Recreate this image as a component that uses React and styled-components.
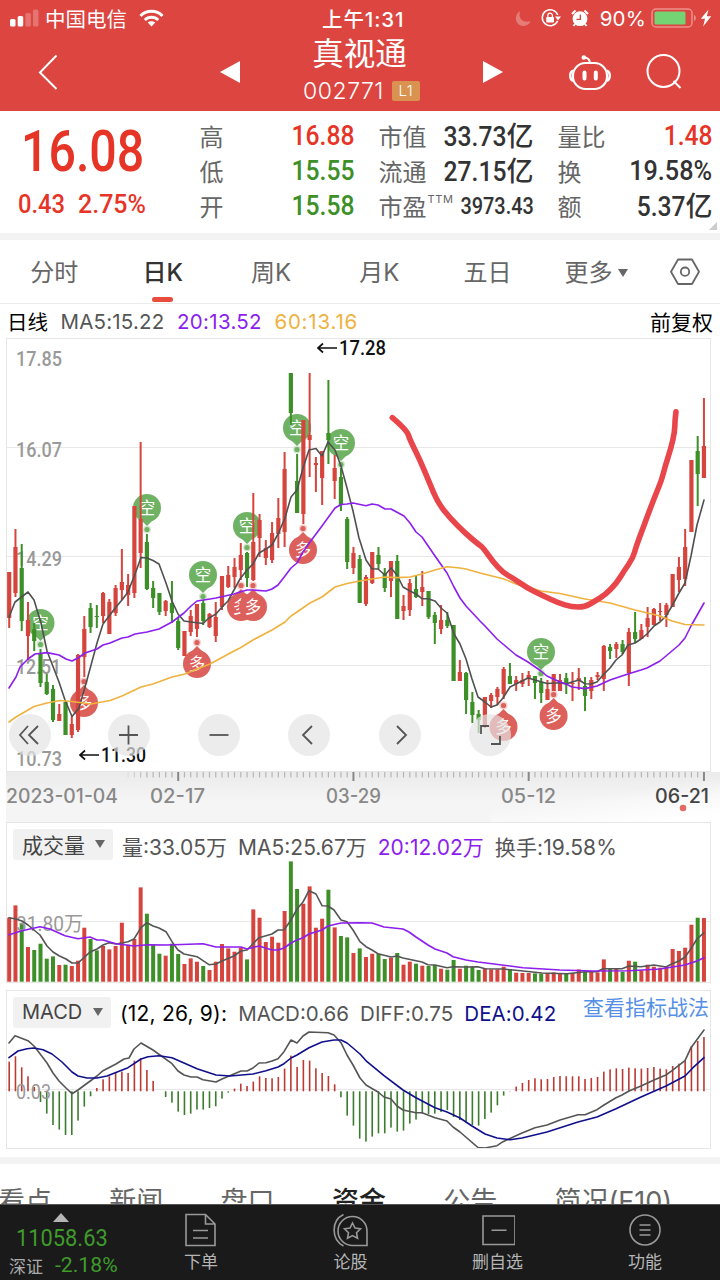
import React from "react";
import styled, { createGlobalStyle } from "styled-components";

const RED = "#d6453d";
const GREEN = "#3d8f27";
const PURPLE = "#8c1eee";

const GlobalStyle = createGlobalStyle`
    * {
        box-sizing: border-box;
    }

    body {
        margin: 0;
        background: #fff;
        font-family: Inter, "Noto Sans CJK SC", sans-serif;
        color: #333;
    }

    svg {
        display: block;
    }
`;

const Screen = styled.div`
    width: 720px;
    height: 1280px;
    overflow: hidden;
    display: flex;
    flex-direction: column;
    white-space: nowrap;
`;

/* ---------- header ---------- */

const Header = styled.header`
    flex: 0 0 111px;
    background: #dc4540;
    color: #fff;
`;

const StatusBar = styled.div`
    height: 36px;
    padding: 0 8px 0 10px;
    display: grid;
    grid-template-columns: 312px 1fr auto;
    align-items: center;
    font-size: 20px;
`;

const StatusGroup = styled.div`
    display: flex;
    align-items: center;
    gap: ${({ $gap }) => $gap || 0}px;
`;

const Carrier = styled.span`
    margin: 0 12px 0 6px;
    font-size: 20.5px;
    font-weight: 390;
`;

const Clock = styled.span`
    font-size: 20.5px;
    font-weight: 450;
    letter-spacing: 0.9px;
`;

const Percent = styled.span`
    font-size: 20.5px;
    letter-spacing: 0.2px;
    margin: 0 -5px 0 1px;
`;

const NavBar = styled.div`
    height: 75px;
    display: grid;
    grid-template-columns: 210px 40px 223px 40px 1fr;
    align-items: center;
`;

const NavIcon = styled.div`
    padding: 0 0 3px ${({ $left }) => $left || 0}px;
    display: flex;
    gap: ${({ $gap }) => $gap || 0}px;
`;

const TitleBlock = styled.div`
    display: flex;
    flex-direction: column;
    align-items: center;
    height: 75px;
`;

const StockName = styled.div`
    margin-right: 4px;
    font-size: 31.5px;
    line-height: 35px;
    font-weight: 390;
`;

const StockCode = styled.div`
    display: flex;
    align-items: center;
    gap: 8px;
    height: 44px;
    font-size: 23px;
    font-weight: 350;
    letter-spacing: 0.5px;
`;

const LevelBadge = styled.span`
    width: 28px;
    height: 20px;
    border-radius: 2px;
    background: #d9924f;
    font-size: 15px;
    line-height: 20px;
    text-align: center;
`;

/* ---------- quote ---------- */

const Quote = styled.section`
    position: relative;
    flex: 0 0 122px;
    display: grid;
    grid-template-columns: 164px 155px 155px 155px;
    column-gap: 24px;
    padding-top: 7px;
`;

const Corner = styled.i`
    position: absolute;
    right: 3px;
    bottom: 3px;
    border: 4px solid;
    border-color: transparent #ccc #ccc transparent;
`;

const PriceBlock = styled.div`
    width: 176px;
    color: #e63426;
    font-family: Roboto, sans-serif;
    font-weight: 500;
`;

const Num = styled.span`
    display: inline-block;
    font-family: Roboto, "Noto Sans CJK SC", sans-serif;
    font-weight: ${({ $weight }) => $weight || 500};
    font-size: ${({ $size }) => $size || 28}px;
    transform: scaleX(${({ $scale }) => $scale || 0.88});
    transform-origin: ${({ $origin }) => $origin || "right"} center;
`;

const Price = styled.div`
    height: 69px;
    line-height: 68px;
    padding-left: 21px;
`;

const Change = styled.div`
    display: flex;
    gap: 9px;
    padding-left: 18px;
    height: 35px;
    line-height: 35px;
`;

const QuoteColumn = styled.div`
    margin-left: 11.5px;
    width: 155px;
`;

const QuoteRow = styled.div`
    display: flex;
    justify-content: space-between;
    align-items: center;
    height: 35px;
    font-size: 24px;
    font-weight: 390;
    color: #666;

    ${Num} {
        margin-left: -20px;
        color: ${({ $color }) => $color || "#333"};
    }
`;

const Unit = styled.span`
    display: inline-block;
    font-family: "Noto Sans CJK SC", sans-serif;
    font-size: 27px;
    font-weight: 500;
    line-height: 33px;
    color: #333;
`;

const Sup = styled.sup`
    font-size: 11px;
    letter-spacing: 0.6px;
    vertical-align: 13px;
    line-height: 0;
    margin-left: 1px;
`;

const Divider = styled.div`
    flex: 0 0 7px;
    background: #f3f3f3;
`;

/* ---------- period tabs ---------- */

const PeriodTabs = styled.nav`
    flex: 0 0 64px;
    display: grid;
    grid-template-columns: 108.5px 108.5px 108px 108.5px 108px 109px 1fr;
    border-bottom: 1px solid #ececec;
`;

const PeriodTab = styled.div`
    display: flex;
    flex-direction: column;
    align-items: center;
    padding-top: 16px;
    font-size: 24px;
    line-height: 34px;
    font-weight: ${({ $active }) => ($active ? 500 : 370)};
    color: ${({ $active }) => ($active ? "#333" : "#666")};

    &::after {
        content: "";
        width: 21px;
        height: 5px;
        margin-top: 7px;
        border-radius: 3px;
        background: ${({ $active }) => ($active ? "#e84d3d" : "transparent")};
    }
`;

const Caret = styled.i`
    display: inline-block;
    margin-left: 5px;
    vertical-align: 4px;
    border-left: 5.5px solid transparent;
    border-right: 5.5px solid transparent;
    border-top: 8px solid #666;
`;

const TabIcon = styled.div`
    padding: 17px 0 0 18px;
`;

/* ---------- charts ---------- */

const InfoRow = styled.div`
    flex: 0 0 34px;
    display: flex;
    align-items: center;
    padding: 0 7px 0 7px;
    gap: 12.5px;
    font-size: 20.5px;
    color: #555;
`;

const Metric = styled.span`
    color: ${({ $color }) => $color || "#555"};
    font-size: ${({ $size }) => $size || 20.5}px;
    letter-spacing: ${({ $spacing }) => $spacing || 0}px;
    font-weight: 390;
`;

const Adjust = styled.span`
    margin-left: auto;
    font-size: 21px;
    font-weight: 390;
    color: #000;
`;

const ChartPanel = styled.section`
    position: relative;
    flex: 0 0 ${({ $height }) => $height}px;
    width: 705px;
    margin: 0 0 ${({ $after }) => $after || 0}px 6px;
    border: 1px solid #e6e6e6;

    > svg {
        margin: 0 -1px;
    }
`;

const Controls = styled.div`
    position: absolute;
    left: 1.5px;
    bottom: 15px;
    display: flex;
    gap: 48.3px;

    button:first-child {
        margin-right: 9px;
    }
`;

const RoundButton = styled.button`
    width: 42px;
    height: 42px;
    padding: 0;
    border: 0;
    border-radius: 50%;
    background: rgba(228, 228, 228, 0.7);
`;

const TimeAxis = styled.div`
    flex: 0 0 50px;
    margin-left: 6px;
    background: linear-gradient(172deg, rgba(255, 255, 255, 0) 45%, #fff 90%) right / 230px 100% no-repeat,
        linear-gradient(#ebebeb, #f5f5f5 60%);
`;

const IndicatorHead = styled.div`
    display: flex;
    align-items: center;
    height: 38px;
    padding-left: 6px;
    gap: 11px;
    color: #555;
`;

const Select = styled.div`
    display: flex;
    align-items: center;
    justify-content: space-between;
    width: ${({ $width }) => $width}px;
    height: 31px;
    margin: 5px -2px 0 0;
    padding: 0 8px 2px 9px;
    border-radius: 3px;
    background: #f1f1f1;
    color: #444;
    font-size: ${({ $size }) => $size || 20}px;
    font-weight: 390;
`;

const HeadText = styled(Metric)`
    margin-top: 7px;
`;

const HelpLink = styled.a`
    margin: 0 1px 8px auto;
    font-size: 21px;
    font-weight: 390;
    color: #5590e6;
`;

/* ---------- bottom ---------- */

const SectionTabs = styled.nav`
    flex: 0 0 40px;
    overflow: hidden;
    display: flex;
    padding: 20px 0 0 0;
    margin-left: -2px;
    gap: 57.3px;
    font-size: 27px;
    line-height: 36px;
`;

const SectionTab = styled.span`
    font-weight: ${({ $active }) => ($active ? 500 : 370)};
    color: ${({ $active }) => ($active ? "#222" : "#666")};
`;

const BottomBar = styled.footer`
    flex: 0 0 77px;
    display: grid;
    grid-template-columns: 126px 150px 149px 145px 150px;
    border-top: 1px solid #555;
    background: #1a1a1a;
    color: #b5b5b5;
`;

const IndexBox = styled.div`
    padding-left: 9px;
    color: #3f9b2b;

    i {
        display: block;
        width: 0;
        margin: 8px 0 0 44px;
        border-left: 8px solid transparent;
        border-right: 8px solid transparent;
        border-bottom: 9px solid #b5b5b5;
    }
`;

const IndexValue = styled.div`
    height: 33px;
    padding-left: 7px;
    line-height: 33px;
`;

const IndexChange = styled.div`
    display: flex;
    align-items: center;
    gap: 12px;
    height: 20px;
    font-size: 17px;

    span:first-child {
        color: #aaa;
        font-weight: 390;
    }
`;

const BarItem = styled.div`
    display: flex;
    flex-direction: column;
    align-items: center;
    padding-top: 8px;
    gap: 3px;
    font-size: 17px;
    font-weight: 390;
    line-height: 25px;
`;

/* One row per session: high, body top, body bottom, low (screen y), "r" rising or "g" falling */
const CANDLES = [
    [572, 572, 618, 628, "r"], [529, 547, 593, 597, "r"], [544, 568, 621, 631, "g"], [602, 620, 636, 660, "r"],
    [623, 629, 641, 651, "g"], [649, 653, 683, 687, "g"], [674, 682, 694, 695, "g"], [685, 689, 720, 722, "g"],
    [704, 714, 721, 721, "r"], [702, 702, 735, 735, "g"], [716, 724, 735, 738, "r"], [654, 655, 730, 732, "r"],
    [616, 629, 657, 677, "r"], [603, 608, 627, 633, "g"], [605, 616, 617, 628, "g"], [592, 593, 616, 623, "r"],
    [599, 602, 634, 634, "r"], [585, 588, 613, 616, "r"], [549, 582, 590, 600, "r"], [574, 585, 595, 606, "r"],
    [506, 506, 593, 598, "r"], [442, 519, 553, 568, "r"], [534, 542, 589, 590, "g"], [581, 588, 598, 608, "g"],
    [593, 593, 612, 615, "g"], [600, 601, 611, 616, "r"], [581, 603, 613, 623, "g"], [617, 621, 648, 650, "g"],
    [631, 631, 656, 656, "r"], [610, 616, 632, 636, "r"], [604, 604, 629, 637, "r"], [600, 603, 621, 625, "g"],
    [613, 614, 627, 628, "r"], [602, 617, 636, 642, "r"], [576, 576, 607, 610, "r"], [566, 575, 587, 588, "r"],
    [558, 567, 577, 588, "r"], [543, 555, 570, 580, "r"], [552, 553, 578, 587, "g"], [493, 542, 580, 581, "r"],
    [514, 520, 538, 557, "r"], [540, 548, 558, 565, "r"], [522, 533, 560, 563, "r"], [498, 518, 534, 548, "r"],
    [452, 469, 532, 547, "r"], [373, 373, 413, 425, "g"], [454, 481, 513, 513, "g"], [420, 420, 514, 524, "r"],
    [373, 435, 440, 477, "r"], [457, 463, 465, 492, "r"], [451, 451, 478, 505, "r"], [380, 433, 440, 464, "g"],
    [455, 468, 481, 499, "r"], [468, 477, 505, 511, "g"], [517, 519, 562, 569, "g"], [547, 553, 568, 574, "r"],
    [555, 559, 603, 603, "g"], [575, 577, 604, 606, "r"], [552, 552, 583, 584, "r"], [547, 555, 564, 569, "g"],
    [568, 573, 588, 592, "g"], [561, 561, 581, 597, "r"], [555, 561, 619, 619, "g"], [595, 606, 611, 620, "r"],
    [579, 583, 610, 616, "r"], [575, 589, 597, 598, "g"], [571, 587, 592, 606, "r"], [591, 591, 617, 619, "g"],
    [612, 615, 623, 644, "g"], [605, 620, 629, 634, "r"], [612, 620, 626, 628, "g"], [625, 625, 681, 681, "g"],
    [660, 672, 681, 681, "r"], [672, 673, 700, 714, "g"], [692, 702, 715, 723, "g"], [710, 714, 720, 733, "g"],
    [697, 697, 725, 728, "r"], [693, 695, 701, 708, "r"], [687, 689, 697, 705, "r"], [667, 669, 694, 699, "r"],
    [663, 676, 684, 684, "g"], [676, 680, 684, 691, "r"], [673, 680, 684, 687, "r"], [671, 675, 679, 686, "r"],
    [676, 676, 683, 699, "g"], [678, 682, 693, 703, "g"], [680, 689, 700, 700, "r"], [674, 674, 691, 691, "r"],
    [674, 680, 691, 691, "r"], [673, 678, 683, 694, "g"], [672, 683, 684, 701, "r"], [668, 678, 680, 690, "r"],
    [677, 686, 696, 711, "g"], [677, 680, 691, 699, "r"], [672, 675, 677, 680, "r"], [645, 646, 679, 691, "r"],
    [644, 647, 651, 659, "g"], [642, 644, 649, 658, "r"], [640, 644, 652, 654, "g"], [628, 632, 673, 686, "r"],
    [612, 632, 639, 643, "g"], [624, 630, 639, 639, "r"], [607, 618, 627, 637, "r"], [608, 609, 625, 625, "r"],
    [603, 611, 612, 621, "r"], [603, 605, 615, 627, "r"], [574, 574, 607, 607, "r"], [557, 567, 580, 592, "r"],
    [529, 547, 579, 586, "r"], [460, 460, 532, 532, "r"], [436, 451, 474, 506, "g"], [398, 446, 478, 478, "r"],
];

/* Bar heights in px */
const VOLUMES = [
    64, 76.3, 58, 34.7, 31.7, 38, 23, 25.3, 16.7, 17, 15.7, 21, 54, 42.7, 31.3, 35.7, 32.3, 35.7, 59, 37, 42.7, 94.3,
    68, 37, 28, 26, 38, 27.7, 17.7, 23.3, 20, 15.7, 11.7, 20, 37.7, 33.3, 30, 34, 22.3, 72.3, 64, 39.7, 45, 39, 70.7,
    120.3, 92.7, 78, 95.3, 54, 63, 92, 54.3, 45.7, 44.3, 28.7, 33.3, 24.7, 28, 27.7, 22.7, 24, 28.7, 17, 20, 18, 16,
    15.7, 16.7, 13, 12, 21.7, 13, 16, 15, 11.7, 13.3, 12.3, 12.3, 15, 12.3, 9, 8.7, 8.7, 8.3, 8, 8.7, 9.3, 8.7, 8, 8.7,
    12.3, 9.7, 10, 9.3, 22.3, 12.7, 13, 10, 21, 20, 11.3, 17, 15, 14, 15, 32.7, 30.7, 34, 57, 64, 63.7,
];

const MACD_BARS = [
    29.7, 35, 24, 15, 4.3, -10.7, -22.3, -33.7, -38.3, -43.7, -43.7, -29.3, -15.3, -5, 3.3, 12, 15, 18.3, 19.7, 18.3,
    30.7, 33, 21.3, 10.3, 0, -5.7, -11.3, -20.3, -23.7, -22.3, -18.3, -18.3, -16.7, -15, -7.3, -1.3, 2.7, 7.7, 5.3,
    9.7, 15, 13.3, 13, 14.3, 22.7, 35.7, 24.3, 31.3, 30.7, 23, 18.3, 15.3, 7, -6, -24.3, -34.3, -47.3, -50.3, -45.3,
    -42, -42, -36.3, -40.3, -39.3, -32.3, -28.3, -22.3, -22.7, -22.3, -20.7, -18.7, -25.7, -28.7, -30.3, -33.7, -34.3,
    -27.7, -21.3, -14, -4.3, 0.3, 4.7, 8.3, 11.3, 13, 12, 12.3, 14.3, 15.3, 15, 15, 15, 12.3, 13.3, 14.3, 19.7, 22, 23,
    22.3, 23.7, 23, 22.7, 23.3, 24.3, 22.7, 22, 25.3, 27.7, 31, 45.3, 50.3, 54.3,
];

const MA5 =
    "9,617 15,602 28,592 34,600 41,623 47,651 59,682 65,700 72,716.5 79,708 87,680 97,643 103,624 116,607 122,600 128,592 135,574 141,557.5 147,558 153,560.5 159,564 166,583 172,601 178,614 184,621 191,622 203,623.5 209,618 216,614 222,607 228,601 234,590 240,579 247,570 253,564 259,553 266,549 272,545 278,534 285,518 291,497 297,490 303,468 309,450 316,448.5 322,456 328,442 335,450 341,466 347,488 353,511 359,538 366,560 372,568.7 378,569 385,575 391,568 397,575 403,587 410,591 416,594 422,598.6 428,598.7 435,601 441,608 447,613 454,634 460,644 466,659 472,679 478,697 485,702 491,707 497,705 503,698 510,687 516,684 522,681 528,678 535,680 547,683.5 560,682.7 566,684 572,682 579,680 585,683.7 591,684 597,682 603,675 610,668 616,660 622,655 628,645 635,643 641,639 647,634 654,626 660,622 666,616 672,606 679,593 685,583 691,556 697,525 704,500";
const MA20 =
    "9,688 16,677 20,667 28,659 35,654 47,652.6 59,655 66,659 72,661 78,658 85,653 97,649 103,645 110,643 122,638 128,637 135,634 147,632 159,629 172,622 184,613 191,606 197,601 210,599 216,598 234,594 240,592 247,590 253,590 266,591 272,589 278,585 285,576 291,568 297,563 303,552 310,542 322,526 335,508 341,504.5 347,504 353,503 366,505.7 372,504 378,505 385,509 391,509 404,516 410,523 416,532 422,537 435,556 447,573 454,587 460,598 466,606 480,621 485,626 497,639 510,650 516,655 528,662 541,671 547,676 560,682 566,684 572,687 585,688.6 597,686 610,680 616,678 628,674 641,670 647,668 660,661 666,656 679,645 685,638 691,626 704,603";
const MA60 =
    "9,722 16,717 34,706.5 47,703 60,700.5 72,701.5 91,704 110,700.5 122,696 141,687 153,684 172,677 185,674 197,669 210,664 234,651 240,648 253,640 272,630 285,622 291,616 297,612 310,603 322,597 335,587 347,583.5 360,581 372,579 385,577 397,577.6 410,577 422,574 435,570 447,566.7 460,568 466,569 480,573 504,579 516,584 541,591 560,593.5 585,599 610,603 635,610 660,616 672,621 685,624.5 704,625";
const DRAWN =
    "392.3,417.7 406.7,430 410,440 420,460 429,481.7 438,503 450,518 465,533 478,544 483,547.5 493,561.7 503,572.7 513,578 526.7,587.7 543,595.7 558,602.7 571.7,607 585,607 595,601 605,595 616.7,583 624,571 633,558 636,546.7 645,522.7 655,496 661.7,480 665,466.7 671,448 674.7,431.7 675,420 676,411.7";
const VOL5 =
    "9,917.7 15,918.7 22,921 28,925 34,930 40,935 47,946 53,952 59,955.7 66,959 72,963 78,963 84,957.7 90,952 97,949 103,945 109,942.7 116,944 122,943 128,941.7 134,939 141,927.7 147,922.7 153,926 159,928 166,931.7 172,941.7 178,950 184,954 197,956.7 203,960.7 209,964.7 216,964 222,961 234,956 241,951 247,950 253,943.7 259,937.7 266,935.7 272,934 278,930 284,930 291,920 297,909 303,902 309,890.7 316,894 322,905.7 328,906 334,910 341,920 347,921.7 353,930 360,941.7 366,946.7 372,950 378,953.7 391,957 397,956 403,958 422,962 428,964.7 435,965 447,967.7 453,966.7 466,967 478,966.7 485,968.7 503,969 523,971 542,973 567,973.7 585,971.7 597,971.7 603,968.7 622,968.7 629,966 641,966.7 654,965 666,967 672,963.7 679,961 685,957 691,948.7 697,939 704,932.7";
const VOL20 =
    "9,934.7 22,930.7 40,926.7 50,929 65,935.7 78,938.7 90,937 97,940 103,940 116,943.7 134,946 147,944.7 167,945 203,943.7 216,947 241,947 247,949 259,946 272,950 278,950 284,948 291,943 297,940 303,937.7 309,934 322,930 328,926 341,923 360,922.7 372,923 384,927 403,929 409,932 416,937 428,945 435,949 447,953 453,956.7 466,960 478,962 510,966 523,967.7 560,970 593,971 629,970.7 660,969 685,965 697,961 704,957.7";
const DIFF =
    "9,1042 15,1034.7 28,1039.7 34,1045 40,1052.7 47,1062 53,1072 59,1080 66,1087 72,1092.7 78,1089 97,1075 103,1069.7 116,1063 124,1058 129,1057 134,1048 141,1042 153,1049 172,1062.7 178,1070 184,1074 191,1076 197,1076 203,1078.7 216,1081 222,1078 241,1070 247,1070 253,1067 259,1062 266,1061.7 272,1060 278,1057.7 284,1050.7 291,1039 297,1042 303,1035 309,1031 328,1031.7 334,1034 341,1041.7 347,1054 353,1064 360,1077 366,1084 378,1091 384,1096 391,1098 397,1105 403,1109 416,1111.7 422,1111.7 435,1116.7 447,1120 453,1126 460,1131 478,1146.5 485,1147 497,1144.7 503,1140.7 522,1132 535,1126.7 547,1124 560,1119 578,1113.7 585,1113.7 597,1108.7 604,1104 616,1096.7 622,1094 629,1090 641,1085 654,1079 666,1074 672,1069.7 685,1059.7 691,1046.7 704,1029";
const DEA =
    "9,1056.7 18,1050 27,1047.7 34,1047 43,1048.7 52,1053 62,1061 72,1071 78,1075 87,1077 97,1077 107,1075 128,1066.7 141,1058 148,1055.7 159,1054.7 172,1056.7 184,1062 197,1067.7 216,1074 230,1075 253,1073 266,1069.7 278,1066 284,1062.7 291,1057 297,1054 309,1046.7 322,1041 334,1039 341,1039 347,1042 353,1047 360,1053 367,1060.7 384,1074.7 403,1089 416,1096.7 435,1106.7 447,1111 460,1117 472,1125 485,1133 497,1137 510,1138.7 522,1137 547,1131 578,1121 597,1116 616,1107.7 641,1096 666,1085 685,1075 693,1066.7 704,1056.7";

const SHORT_MARKS = [[40.5, 623], [147, 508], [203, 575], [247, 526], [297, 428], [341, 443], [541, 652]];
const LONG_MARKS = [[84, 703], [197, 664], [241, 607], [253, 607], [303, 550], [503.5, 727], [553.6, 716]];

const barX = (i) => 9.2 + i * 6.259;

/* Rounds the corners of a hand-drawn stroke by curving through segment midpoints */
const smoothPath = (points) => {
    const pts = points.split(" ").map((p) => p.split(",").map(Number));
    const last = pts[pts.length - 1];
    const curves = pts.slice(1, -1).map(([x, y], i) => {
        const [nx, ny] = pts[i + 2];
        return `Q${x} ${y} ${(x + nx) / 2} ${(y + ny) / 2}`;
    });
    return `M${pts[0].join(" ")} ${curves.join(" ")} L${last.join(" ")}`;
};

const Line = ({ points, color }) => (
    <polyline
        points={points}
        fill="none"
        stroke={color}
        strokeWidth="1.6"
        strokeLinejoin="round"
        strokeLinecap="round"
    />
);

const AxisText = ({ x = 16, y, width, weight = 500, children }) => (
    <text
        x={x}
        y={y}
        textLength={width}
        lengthAdjust="spacingAndGlyphs"
        fontFamily="Roboto, 'Noto Sans CJK SC', sans-serif"
        fontSize="20.5"
        fontWeight={weight}
        fill="#999"
    >
        {children}
    </text>
);

const Mark = ({ x, y, up, label, color }) => {
    const dir = up ? -1 : 1;
    return (
        <g>
            <circle cx={x} cy={y} r="14" fill={color} />
            <path d={`M${x - 7} ${y + dir * 11} L${x} ${y + dir * 18} L${x + 7} ${y + dir * 11}Z`} fill={color} />
            <circle cx={x} cy={y + dir * 21.5} r="4" fill={color} opacity="0.3" />
            <circle cx={x} cy={y + dir * 21.5} r="2.6" fill={color} />
            <text
                x={x}
                y={y + 6}
                textAnchor="middle"
                fontFamily="'Noto Sans CJK SC', sans-serif"
                fontSize="16.5"
                fill="#fff"
            >
                {label}
            </text>
        </g>
    );
};

const PriceTag = ({ x, y, width, children }) => (
    <g>
        <path
            d={`M${x + 20} ${y} H${x + 1} M${x + 6} ${y - 4.5} L${x + 1} ${y} L${x + 6} ${y + 4.5}`}
            fill="none"
            stroke="#111"
            strokeWidth="1.7"
        />
        <text
            x={x + 22}
            y={y + 7}
            textLength={width}
            lengthAdjust="spacingAndGlyphs"
            fontFamily="Roboto, sans-serif"
            fontSize="20"
            fontWeight="500"
            fill="#111"
        >
            {children}
        </text>
    </g>
);

const PriceChart = () => (
    <svg width="705" height="432" viewBox="6 339 705 432">
        {[447.5, 556.5, 665.5].map((y) => (
            <path key={y} d={`M7 ${y}H710`} stroke="#e8e8e8" />
        ))}
        <AxisText y={365.5} width={46}>17.85</AxisText>
        <AxisText y={457} width={46}>16.07</AxisText>
        <AxisText y={565.5} width={46}>14.29</AxisText>
        <AxisText y={674} width={45}>12.51</AxisText>
        <AxisText y={765.5} width={46}>10.73</AxisText>
        {SHORT_MARKS.map(([x, y]) => (
            <Mark key={x} x={x} y={y} label="空" color="#6fb264" />
        ))}
        {LONG_MARKS.map(([x, y]) => (
            <Mark key={x} x={x} y={y} up label="多" color="#dc605b" />
        ))}
        {CANDLES.map(([high, top, bottom, low, dir], i) => (
            <g key={i} fill={dir === "r" ? RED : GREEN}>
                <rect x={barX(i) - 1} y={high} width="2" height={low - high} />
                <rect x={barX(i) - 2.1} y={top} width="4.2" height={bottom - top} />
            </g>
        ))}
        <Line points={MA5} color="#505050" />
        <Line points={MA20} color={PURPLE} />
        <Line points={MA60} color="#efb23f" />
        <path
            d={smoothPath(DRAWN)}
            fill="none"
            stroke="#e8464a"
            strokeWidth="5.6"
            strokeLinecap="round"
            strokeLinejoin="round"
        />
        <PriceTag x={317} y={348} width={47}>17.28</PriceTag>
        <PriceTag x={79} y={755} width={45}>11.30</PriceTag>
    </svg>
);

const AXIS_MAJOR = { 27: "02-17", 55: "03-29", 83: "05-12", 111: "06-21" };

const DateText = ({ x, width, dark, children }) => (
    <text
        x={x}
        y="803"
        textLength={width}
        lengthAdjust="spacingAndGlyphs"
        fontSize="19.5"
        fontWeight="500"
        fill={dark ? "#444" : "#888"}
    >
        {children}
    </text>
);

const AxisSvg = () => (
    <svg width="714" height="50" viewBox="6 772 714 50">
        {CANDLES.map((_, i) =>
            i < 19 ? null : (
                <path
                    key={i}
                    d={`M${barX(i)} 772v${AXIS_MAJOR[i] ? 9 : 5.5}`}
                    stroke={AXIS_MAJOR[i] ? "#888" : "#b5b5b5"}
                    strokeWidth={AXIS_MAJOR[i] ? 2 : 1.2}
                    opacity={i < 22 ? (i - 18) / 4 : 1}
                />
            )
        )}
        <DateText x={6} width={112}>2023-01-04</DateText>
        <DateText x={150} width={55}>{AXIS_MAJOR[27]}</DateText>
        <DateText x={326} width={55}>{AXIS_MAJOR[55]}</DateText>
        <DateText x={501} width={55}>{AXIS_MAJOR[83]}</DateText>
        <DateText x={655} width={54} dark>{AXIS_MAJOR[111]}</DateText>
        <circle cx="683" cy="808" r="3.3" fill="#e06b66" />
    </svg>
);

const VolumeChart = () => (
    <svg width="705" height="121" viewBox="6 861 705 121">
        <path d="M7 921.5H710" stroke="#e8e8e8" />
        {VOLUMES.map((h, i) => (
            <rect
                key={i}
                x={barX(i) - 2}
                y={981.7 - h}
                width="4"
                height={h}
                fill={CANDLES[i][4] === "r" ? RED : GREEN}
            />
        ))}
        <AxisText y={931} width={67} weight={400}>31.80万</AxisText>
        <Line points={VOL5} color="#555" />
        <Line points={VOL20} color={PURPLE} />
    </svg>
);

const MacdChart = () => (
    <svg width="705" height="119" viewBox="6 1028 705 119">
        <path d="M7 1088.5H710" stroke="#e8e8e8" />
        {MACD_BARS.map((h, i) => (
            <rect
                key={i}
                x={barX(i) - 0.8}
                y={h > 0 ? 1090.3 - h : 1090.3}
                width="1.6"
                height={Math.abs(h)}
                fill={h > 0 ? "#bb3a33" : "#3b7c2e"}
            />
        ))}
        <AxisText y={1097.5} width={35} weight={400}>0.03</AxisText>
        <Line points={DIFF} color="#555" />
        <Line points={DEA} color="#10108c" />
    </svg>
);

const CONTROL_ICONS = [
    "M19 12 L11 21 L19 30 M29 12 L20 21 L29 30",
    "M20.5 11.5V30.5 M11 21H30",
    "M11.5 21H30.5",
    "M24 12 L15 21 L24 30",
    "M18 12 L27 21 L18 30",
    "M12 20V12H20 M31 22V30H22",
];

const SignalIcon = () => (
    <svg width="29" height="18" viewBox="0 0 29 18" fill="#fff">
        <rect x="0" y="10" width="5.5" height="7.5" rx="1.5" />
        <rect x="7.7" y="7" width="5.5" height="10.5" rx="1.5" />
        <rect x="15.4" y="4" width="5.5" height="13.5" rx="1.5" opacity="0.25" />
        <rect x="23" y="0.5" width="5.5" height="17" rx="1.5" opacity="0.25" />
    </svg>
);

const WifiIcon = () => (
    <svg width="25" height="18" viewBox="0 0 25 18" fill="none" stroke="#fff" strokeWidth="3">
        <path d="M1.5 7 C7.5 0.8 17.5 0.8 23.5 7" />
        <path d="M5.8 11 C9.5 7.3 15.5 7.3 19.2 11" strokeWidth="2.8" />
        <path d="M12.5 17.5 L8.7 13.6 C10.8 11.7 14.2 11.7 16.3 13.6Z" fill="#fff" stroke="none" />
    </svg>
);

const MoonIcon = () => (
    <svg width="16" height="17" viewBox="0 0 16 17">
        <path d="M5.2 1 C-1.5 4.5 -0.5 15.5 8.5 16 C12 16 14.5 14 15.5 11.3 C8 13.5 2.5 8 5.2 1Z" fill="#e67b77" />
    </svg>
);

const LockIcon = () => (
    <svg width="20" height="18" viewBox="0 0 20 18" fill="none" stroke="#fff">
        <path d="M16.6 12 A8 8 0 1 1 16.8 6" strokeWidth="1.5" />
        <path d="M14 7.5H20L17 11.5Z" fill="#fff" stroke="none" />
        <rect x="5.2" y="8" width="7.8" height="5.6" rx="0.8" fill="#fff" stroke="none" />
        <path d="M6.8 8V6.5a2.3 2.3 0 0 1 4.6 0V8" strokeWidth="1.3" />
    </svg>
);

const AlarmIcon = () => (
    <svg width="18" height="18" viewBox="0 0 18 18">
        <circle cx="9" cy="9.7" r="7.4" fill="#fff" />
        <path d="M1 5 L4.5 1.5 M17 5 L13.5 1.5 M4 15 L2.5 17 M14 15 L15.5 17" stroke="#fff" strokeWidth="2" />
        <path d="M9.3 5.5V10.3H5.5" stroke="#dc4540" strokeWidth="1.3" fill="none" />
    </svg>
);

const BatteryIcon = () => (
    <svg width="46" height="20" viewBox="0 0 46 20">
        <rect x="1" y="1" width="40" height="18" rx="4" fill="none" stroke="#ec908c" strokeWidth="1.5" />
        <rect x="3.5" y="3.5" width="31" height="13" rx="1.5" fill="#74d474" />
        <path d="M43 7c2.5 1 2.5 5 0 6Z" fill="#ec908c" />
    </svg>
);

const BoltIcon = () => (
    <svg width="12" height="18" viewBox="0 0 12 18">
        <path d="M8.5 0.5 L0.8 9.8 H5 L3.2 17.5 L11.2 7.3 H6.8Z" fill="#fff" />
    </svg>
);

const RobotIcon = () => (
    <svg width="42" height="40" viewBox="0 0 42 40" fill="none" stroke="#fff" strokeWidth="2.1">
        <rect x="4" y="11" width="34" height="26" rx="12.5" />
        <path d="M4 18.5 C0.3 20 0.3 27 4 29 M38 18.5 C41.7 20 41.7 27 38 29" strokeWidth="2.4" />
        <path d="M21 11 C21 7.5 18.5 5.5 15 5.5" />
        <circle cx="14.8" cy="5.5" r="2.3" fill="#fff" stroke="none" />
        <path d="M15.5 20.5V26.5 M26.8 20.5V26.5" strokeWidth="4" strokeLinecap="round" />
    </svg>
);

const SearchIcon = () => (
    <svg width="38" height="38" viewBox="0 0 38 38" fill="none" stroke="#fff" strokeWidth="2">
        <circle cx="18.5" cy="19" r="16" />
        <path d="M28.5 29 L35.5 36" />
    </svg>
);

const QUOTES = [
    [
        { label: "高", value: "16.88", color: "#e63426" },
        { label: "低", value: "15.55", color: GREEN },
        { label: "开", value: "15.58", color: GREEN },
    ],
    [
        { label: "市值", value: "33.73", unit: "亿" },
        { label: "流通", value: "27.15", unit: "亿" },
        { label: "市盈", sup: "TTM", value: "3973.43", size: 23, scale: 0.865 },
    ],
    [
        { label: "量比", value: "1.48", color: "#e63426" },
        { label: "换", value: "19.58%", scale: 0.9 },
        { label: "额", value: "5.37", unit: "亿" },
    ],
];

const SECTIONS = ["看点", "新闻", "盘口", "资金", "公告", "简况(F10)"];

const App = () => {
    return (
        <Screen>
            <GlobalStyle />
            <Header>
                <StatusBar>
                    <StatusGroup>
                        <SignalIcon />
                        <Carrier>中国电信</Carrier>
                        <WifiIcon />
                    </StatusGroup>
                    <Clock>上午1:31</Clock>
                    <StatusGroup $gap={10}>
                        <MoonIcon />
                        <LockIcon />
                        <AlarmIcon />
                        <Percent>90%</Percent>
                        <StatusGroup $gap={3}>
                            <BatteryIcon />
                            <BoltIcon />
                        </StatusGroup>
                    </StatusGroup>
                </StatusBar>
                <NavBar>
                    <NavIcon $left={38}>
                        <svg width="20" height="36" viewBox="0 0 20 36" fill="none" stroke="#fff" strokeWidth="2">
                            <path d="M18.5 1.5 L2 18.5 L18.5 35" />
                        </svg>
                    </NavIcon>
                    <NavIcon $left={10}>
                        <svg width="20" height="24" viewBox="0 0 20 24">
                            <path d="M20 1V23L0 12Z" fill="#fff" />
                        </svg>
                    </NavIcon>
                    <TitleBlock>
                        <StockName>真视通</StockName>
                        <StockCode>
                            002771
                            <LevelBadge>L1</LevelBadge>
                        </StockCode>
                    </TitleBlock>
                    <NavIcon $left={10}>
                        <svg width="20" height="24" viewBox="0 0 20 24">
                            <path d="M0 1V23L20 12Z" fill="#fff" />
                        </svg>
                    </NavIcon>
                    <NavIcon $left={55.5} $gap={34}>
                        <RobotIcon />
                        <SearchIcon />
                    </NavIcon>
                </NavBar>
            </Header>

            <Quote>
                <PriceBlock>
                    <Price>
                        <Num $size={56.5} $scale={0.855} $origin="left">16.08</Num>
                    </Price>
                    <Change>
                        <Num $size={25.5} $scale={0.93} $origin="left">0.43</Num>
                        <Num $size={25.5} $scale={0.98} $origin="left">2.75%</Num>
                    </Change>
                </PriceBlock>
                {QUOTES.map((column, i) => (
                    <QuoteColumn key={i}>
                        {column.map(({ label, sup, value, unit, color, size, scale }) => (
                            <QuoteRow key={label} $color={color}>
                                <span>
                                    {label}
                                    {sup && <Sup>{sup}</Sup>}
                                </span>
                                <span>
                                    <Num $size={size} $scale={scale}>{value}</Num>
                                    {unit && <Unit>{unit}</Unit>}
                                </span>
                            </QuoteRow>
                        ))}
                    </QuoteColumn>
                ))}
                <Corner />
            </Quote>
            <Divider />

            <PeriodTabs>
                <PeriodTab>分时</PeriodTab>
                <PeriodTab $active>日K</PeriodTab>
                <PeriodTab>周K</PeriodTab>
                <PeriodTab>月K</PeriodTab>
                <PeriodTab>五日</PeriodTab>
                <PeriodTab>
                    <span>
                        更多
                        <Caret />
                    </span>
                </PeriodTab>
                <TabIcon>
                    <svg width="32" height="30" viewBox="0 0 32 30" fill="none" stroke="#666" strokeWidth="1.8">
                        <path d="M9 2.5H23L30 14.7L23 27H9L2 14.7Z" strokeLinejoin="round" />
                        <circle cx="16" cy="14.7" r="4.2" />
                    </svg>
                </TabIcon>
            </PeriodTabs>

            <InfoRow>
                <Metric $color="#000">日线</Metric>
                <Metric $spacing={0.2}>MA5:15.22</Metric>
                <Metric $color={PURPLE} $spacing={0.3}>20:13.52</Metric>
                <Metric $color="#efb23f" $spacing={0.8}>60:13.16</Metric>
                <Adjust>前复权</Adjust>
            </InfoRow>

            <ChartPanel $height={434}>
                <PriceChart />
                <Controls>
                    {CONTROL_ICONS.map((d) => (
                        <RoundButton key={d}>
                            <svg width="42" height="42" fill="none" stroke="#555" strokeWidth="1.8">
                                <path d={d} />
                            </svg>
                        </RoundButton>
                    ))}
                </Controls>
            </ChartPanel>
            <TimeAxis>
                <AxisSvg />
            </TimeAxis>

            <ChartPanel $height={160} $after={7}>
                <IndicatorHead>
                    <Select $width={100} $size={21}>
                        成交量
                        <Caret />
                    </Select>
                    <HeadText $size={21}>量:33.05万</HeadText>
                    <HeadText $size={21}>MA5:25.67万</HeadText>
                    <HeadText $size={21} $color={PURPLE}>20:12.02万</HeadText>
                    <HeadText $size={21} $spacing={0.1}>换手:19.58%</HeadText>
                </IndicatorHead>
                <VolumeChart />
            </ChartPanel>
            <ChartPanel $height={159} $after={8}>
                <IndicatorHead>
                    <Select $width={98}>
                        MACD
                        <Caret />
                    </Select>
                    <HeadText $color="#000" $size={21} $spacing={0.2}>(12, 26, 9):</HeadText>
                    <HeadText>MACD:0.66</HeadText>
                    <HeadText $spacing={0.1}>DIFF:0.75</HeadText>
                    <HeadText $color="#10108c" $spacing={0.1}>DEA:0.42</HeadText>
                    <HelpLink>查看指标战法</HelpLink>
                </IndicatorHead>
                <MacdChart />
            </ChartPanel>
            <Divider />

            <SectionTabs>
                {SECTIONS.map((name) => (
                    <SectionTab key={name} $active={name === "资金"}>
                        {name}
                    </SectionTab>
                ))}
            </SectionTabs>

            <BottomBar>
                <IndexBox>
                    <i />
                    <IndexValue>
                        <Num $size={24} $scale={0.91} $weight={450} $origin="left">11058.63</Num>
                    </IndexValue>
                    <IndexChange>
                        <span>深证</span>
                        <Num $size={20} $scale={1.06} $weight={450} $origin="left">-2.18%</Num>
                    </IndexChange>
                </IndexBox>
                <BarItem>
                    <svg width="32" height="34" viewBox="0 0 32 34" fill="none" stroke="#999" strokeWidth="1.6">
                        <path d="M1 1.5H20.5L30 11V32.5H1Z M20.5 1.5V11H30 M8 17.5H23 M8 25H23" />
                    </svg>
                    下单
                </BarItem>
                <BarItem>
                    <svg width="36" height="34" viewBox="0 0 36 34" fill="none" stroke="#999" strokeWidth="1.6">
                        <path d="M34 32.5H19.5 A14.5 14.5 0 1 1 34 18Z" />
                        <path d="M10.5 1.5 C-2 7.5 -2 26.5 10.5 33" />
                        <path d="M19.5 10 L22 15 L27.5 15.8 L23.5 19.7 L24.5 25.2 L19.5 22.6 L14.5 25.2 L15.5 19.7 L11.5 15.8 L17 15Z" />
                    </svg>
                    论股
                </BarItem>
                <BarItem>
                    <svg width="34" height="34" viewBox="0 0 34 34" fill="none" stroke="#999" strokeWidth="1.6">
                        <path d="M2 3H34V31.5H2Z M10.5 17.2H25.5" />
                    </svg>
                    删自选
                </BarItem>
                <BarItem>
                    <svg width="34" height="34" viewBox="0 0 34 34" fill="none" stroke="#999" strokeWidth="1.6">
                        <circle cx="17" cy="17" r="15" />
                        <path d="M11.5 12H22.5 M11.5 17H22.5 M11.5 22H22.5" />
                    </svg>
                    功能
                </BarItem>
            </BottomBar>
        </Screen>
    );
};

export default App;
